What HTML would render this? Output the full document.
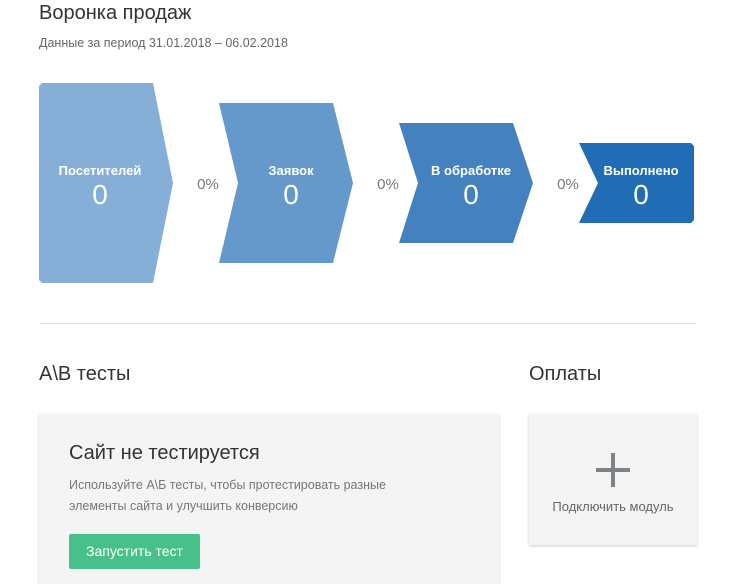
<!DOCTYPE html>
<html><head><meta charset="utf-8"><style>
body{margin:0;width:737px;height:575px;overflow:hidden;background:#fff;font-family:"Liberation Sans","DejaVu Sans",sans-serif;position:relative}
.a{position:absolute;white-space:nowrap}
</style></head><body>
<div class="a" style="left:39px;top:2px;font-size:20px;color:#333">Воронка продаж</div>
<div class="a" style="left:39px;top:36px;font-size:12.5px;color:#666">Данные за период 31.01.2018 – 06.02.2018</div>
<svg class="a" style="left:0;top:0" width="737" height="300">
<g>
<polygon points="42,83 153,83 173,183 153,283 42,283 39,280 39,86" fill="#85afd7"/>
<polygon points="219,103 333,103 353,183 333,263 219,263 238,183" fill="#6699cb"/>
<polygon points="399,123 513,123 533,183 513,243 399,243 418,183" fill="#4482bf"/>
<polygon points="579,143 691,143 694,146 694,220 691,223 579,223 598,183" fill="#216db5"/>
</g>
<g font-family="Liberation Sans, sans-serif" fill="#fff" text-anchor="middle">
<text x="100" y="175" font-size="13" font-weight="bold">Посетителей</text><text x="100" y="204" font-size="28">0</text>
<text x="291" y="175" font-size="13" font-weight="bold">Заявок</text><text x="291" y="204" font-size="28">0</text>
<text x="471" y="175" font-size="13" font-weight="bold">В обработке</text><text x="471" y="204" font-size="28">0</text>
<text x="641" y="175" font-size="13" font-weight="bold">Выполнено</text><text x="641" y="204" font-size="28">0</text>
</g>
<g font-family="Liberation Sans, sans-serif" fill="#777" font-size="15" text-anchor="middle">
<text x="208" y="189">0%</text><text x="388" y="189">0%</text><text x="568" y="189">0%</text>
</g>
</svg>
<div class="a" style="left:39px;top:323px;width:658px;height:1px;background:#e5e5e5"></div>
<div class="a" style="left:39px;top:363px;font-size:20px;color:#333">A\B тесты</div>
<div class="a" style="left:529px;top:363px;font-size:20px;color:#333">Оплаты</div>
<div class="a" style="left:39px;top:414px;width:460px;height:170px;background:#f4f4f4;box-shadow:0 1px 3px rgba(0,0,0,.2)"></div>
<div class="a" style="left:69px;top:442px;font-size:20px;color:#333">Сайт не тестируется</div>
<div class="a" style="left:69px;top:475px;font-size:12.5px;color:#777;line-height:21px">Используйте А\Б тесты, чтобы протестировать разные<br>элементы сайта и улучшить конверсию</div>
<div class="a" style="left:69px;top:534px;width:131px;height:35px;background:#48c08a;border-radius:2px;color:#fff;font-size:14px;line-height:35px;text-align:center">Запустить тест</div>
<div class="a" style="left:529px;top:414px;width:168px;height:131px;background:#f4f4f4;box-shadow:0 1px 3px rgba(0,0,0,.2)"></div>
<div class="a" style="left:596px;top:468px;width:34px;height:4px;background:#7d838a"></div>
<div class="a" style="left:611px;top:453px;width:4px;height:34px;background:#7d838a"></div>
<div class="a" style="left:529px;top:499px;width:168px;text-align:center;font-size:13px;color:#666">Подключить модуль</div>
</body></html>
